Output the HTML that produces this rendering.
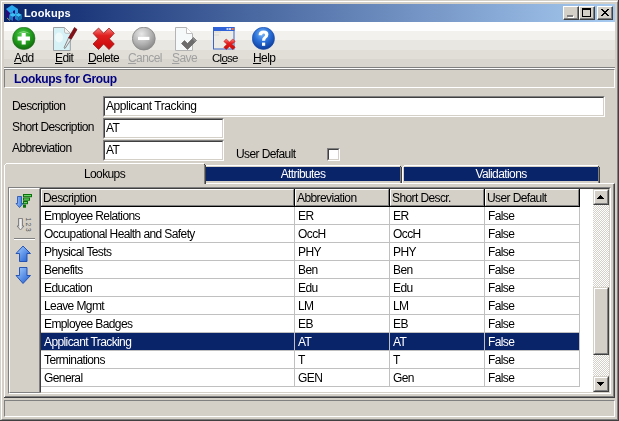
<!DOCTYPE html>
<html><head><meta charset="utf-8">
<style>
*{margin:0;padding:0;box-sizing:border-box}
html,body{width:619px;height:421px;overflow:hidden;background:#d4d0c8;font-family:"Liberation Sans",sans-serif;font-size:12px;letter-spacing:-0.6px;color:#000}
.a{position:absolute}
.t{position:absolute;white-space:nowrap;line-height:13px;will-change:transform}
.sunk2{border-top:1px solid #808080;border-left:1px solid #808080;border-right:1px solid #fff;border-bottom:1px solid #fff}
.inp{position:absolute;background:#fff;border-top:1px solid #808080;border-left:1px solid #808080;border-right:1px solid #fff;border-bottom:1px solid #fff}
.inp:before{content:"";position:absolute;left:0;top:0;right:0;bottom:0;border-top:1px solid #404040;border-left:1px solid #404040;border-right:1px solid #d4d0c8;border-bottom:1px solid #d4d0c8}
.raised{position:absolute;background:#d4d0c8;border-top:1px solid #d4d0c8;border-left:1px solid #d4d0c8;border-right:1px solid #404040;border-bottom:1px solid #404040}
.raised:before{content:"";position:absolute;left:0;top:0;right:0;bottom:0;border-top:1px solid #fff;border-left:1px solid #fff;border-right:1px solid #808080;border-bottom:1px solid #808080}
.tb{position:absolute;top:0;height:14px;width:16px}
.u{text-decoration:underline}
.hc{position:absolute;top:0;height:18px;background:#d4d0c8;border-right:1px solid #000;border-bottom:1px solid #000}
.hc:before{content:"";position:absolute;left:0;top:0;right:0;bottom:0;border-top:1px solid #fff;border-left:1px solid #fff;border-right:1px solid #808080;border-bottom:1px solid #808080}
</style></head><body>
<!-- window frame -->
<div class="a" style="left:1px;top:1px;width:617px;height:419px;border-top:1px solid #fff;border-left:1px solid #fff;border-right:1px solid #808080;border-bottom:1px solid #808080"></div>
<div class="a" style="left:0;top:0;width:619px;height:421px;border-right:1px solid #404040;border-bottom:1px solid #404040"></div>

<!-- title bar -->
<div class="a" style="left:4px;top:4px;width:611px;height:18px;background:linear-gradient(to right,#0a246a,#a6caf0)"></div>
<svg class="a" style="left:5px;top:4px" width="18" height="18" viewBox="0 0 18 18">
 <path d="M1 5 L7 1 L13 5 L13 9 L7 12 L1 9Z" fill="#2aa8ee"/>
 <path d="M1 5 L1 13 L5 16 L5 9Z" fill="#2a0c78"/>
 <path d="M5 9 L7 8 L9 9 L9 12 L7 13 L5 12Z" fill="#1b86c8"/>
 <path d="M8 7 L10 6 L10 10 L8 11Z" fill="#2a0c78"/>
 <path d="M4 11 L8 9 L12 11 L8 13Z" fill="#3cc0f6"/>
 <path d="M4 11 L8 13 L8 17 L4 15Z" fill="#1a78c0"/>
 <path d="M8 13 L12 11 L12 15 L8 17Z" fill="#2a0c78"/>
 <path d="M10 11 L13.5 9 L17 11 L13.5 13Z" fill="#3cc0f6"/>
 <path d="M10 11 L13.5 13 L13.5 17 L10 15Z" fill="#1b86c8"/>
 <path d="M13.5 13 L17 11 L17 15 L13.5 17Z" fill="#1570b0"/>
 <path d="M2 14 L5 16.5" stroke="#c8c070" stroke-width="0.8"/>
</svg>
<div class="t" style="left:24px;top:7px;color:#fff;font-weight:bold;font-size:11px;letter-spacing:0.15px">Lookups</div>
<div class="a" style="left:563px;top:6px;width:16px;height:14px;background:#d4d0c8;border-top:1px solid #fff;border-left:1px solid #fff;border-right:1px solid #404040;border-bottom:1px solid #404040"></div><div class="a" style="left:577px;top:7px;width:1px;height:12px;background:#808080"></div><div class="a" style="left:564px;top:18px;width:14px;height:1px;background:#808080"></div><div class="a" style="left:568px;top:16px;width:6px;height:2px;background:#fff"></div><div class="a" style="left:567px;top:15px;width:6px;height:2px;background:#808080"></div><div class="a" style="left:579px;top:6px;width:16px;height:14px;background:#d4d0c8;border-top:1px solid #fff;border-left:1px solid #fff;border-right:1px solid #404040;border-bottom:1px solid #404040"></div><div class="a" style="left:593px;top:7px;width:1px;height:12px;background:#808080"></div><div class="a" style="left:580px;top:18px;width:14px;height:1px;background:#808080"></div><div class="a" style="left:582px;top:8px;width:9px;height:2px;background:#000"></div><div class="a" style="left:582px;top:10px;width:1px;height:7px;background:#000"></div><div class="a" style="left:590px;top:10px;width:1px;height:7px;background:#000"></div><div class="a" style="left:582px;top:16px;width:9px;height:1px;background:#000"></div><div class="a" style="left:597px;top:6px;width:16px;height:14px;background:#d4d0c8;border-top:1px solid #fff;border-left:1px solid #fff;border-right:1px solid #404040;border-bottom:1px solid #404040"></div><div class="a" style="left:611px;top:7px;width:1px;height:12px;background:#808080"></div><div class="a" style="left:598px;top:18px;width:14px;height:1px;background:#808080"></div><div class="a" style="left:601px;top:9px;width:1px;height:1px;background:#000"></div><div class="a" style="left:602px;top:9px;width:1px;height:1px;background:#000"></div><div class="a" style="left:607px;top:9px;width:1px;height:1px;background:#000"></div><div class="a" style="left:608px;top:9px;width:1px;height:1px;background:#000"></div><div class="a" style="left:602px;top:10px;width:1px;height:1px;background:#000"></div><div class="a" style="left:603px;top:10px;width:1px;height:1px;background:#000"></div><div class="a" style="left:606px;top:10px;width:1px;height:1px;background:#000"></div><div class="a" style="left:607px;top:10px;width:1px;height:1px;background:#000"></div><div class="a" style="left:603px;top:11px;width:1px;height:1px;background:#000"></div><div class="a" style="left:604px;top:11px;width:1px;height:1px;background:#000"></div><div class="a" style="left:605px;top:11px;width:1px;height:1px;background:#000"></div><div class="a" style="left:606px;top:11px;width:1px;height:1px;background:#000"></div><div class="a" style="left:604px;top:12px;width:1px;height:1px;background:#000"></div><div class="a" style="left:605px;top:12px;width:1px;height:1px;background:#000"></div><div class="a" style="left:603px;top:13px;width:1px;height:1px;background:#000"></div><div class="a" style="left:604px;top:13px;width:1px;height:1px;background:#000"></div><div class="a" style="left:605px;top:13px;width:1px;height:1px;background:#000"></div><div class="a" style="left:606px;top:13px;width:1px;height:1px;background:#000"></div><div class="a" style="left:602px;top:14px;width:1px;height:1px;background:#000"></div><div class="a" style="left:603px;top:14px;width:1px;height:1px;background:#000"></div><div class="a" style="left:606px;top:14px;width:1px;height:1px;background:#000"></div><div class="a" style="left:607px;top:14px;width:1px;height:1px;background:#000"></div><div class="a" style="left:601px;top:15px;width:1px;height:1px;background:#000"></div><div class="a" style="left:602px;top:15px;width:1px;height:1px;background:#000"></div><div class="a" style="left:607px;top:15px;width:1px;height:1px;background:#000"></div><div class="a" style="left:608px;top:15px;width:1px;height:1px;background:#000"></div>

<!-- toolbar -->
<div class="a" style="left:4px;top:22px;width:611px;height:45px;background:linear-gradient(to bottom,#fefefe 0,#fefefe 9px,#f2f1ee 9px,#f2f1ee 18px,#e9e7e2 18px,#e9e7e2 28px,#e1ded8 28px,#e1ded8 37px,#d9d6cf 37px)"></div>
<div class="a" style="left:4px;top:67px;width:611px;height:1px;background:#808080"></div>
<div class="a" style="left:4px;top:68px;width:611px;height:1px;background:#fff"></div>

<!-- toolbar icons -->
<svg class="a" style="left:12px;top:27px" width="24" height="24" viewBox="0 0 24 24">
 <defs><radialGradient id="gg" cx="45%" cy="35%" r="65%"><stop offset="0" stop-color="#5fd05a"/><stop offset="0.55" stop-color="#22a01e"/><stop offset="1" stop-color="#0e6a0c"/></radialGradient></defs>
 <circle cx="11.8" cy="11.4" r="11.2" fill="url(#gg)" stroke="#2a6a28" stroke-width="0.6"/>
 <path d="M5 7 Q11.8 1.5 18.6 7 Q11.8 3.6 5 7Z" fill="#b8f0b0" opacity="0.7"/>
 <path d="M9.7 6 H13.7 V9.6 H18 V13.6 H13.7 V17.6 H9.7 V13.6 H5.6 V9.6 H9.7Z" fill="#fff"/>
</svg>
<div class="t" style="left:14px;top:52px"><span class="u">A</span>dd</div>

<svg class="a" style="left:52px;top:26px" width="26" height="26" viewBox="0 0 26 26">
 <path d="M1.5 1.5 H12.5 L18.3 7.3 V24.5 H1.5Z" fill="#d6f2f6" stroke="#9aa0a4" stroke-width="1"/>
 <ellipse cx="7" cy="11.5" rx="4" ry="5" fill="#eefafa"/>
 <path d="M12.5 1.5 L12.5 6 Q13 7.3 14 7.3 H18.3Z" fill="#f4f4f4" stroke="#b0b0b0" stroke-width="0.8"/>
 <path d="M22.5 1.5 L25 3.5 L19 13.5 L16.5 12Z" fill="#8a1018" stroke="#5a0810" stroke-width="0.7"/>
 <path d="M16.5 12 L19 13.5 L13 22.5 L12 21.8Z" fill="#e8e8e8" stroke="#606060" stroke-width="0.7"/>
</svg>
<div class="t" style="left:55px;top:52px"><span class="u">E</span>dit</div>

<svg class="a" style="left:92px;top:27px" width="24" height="24" viewBox="0 0 24 24">
 <defs><linearGradient id="rg" x1="0" y1="0" x2="0" y2="1"><stop offset="0" stop-color="#f88080"/><stop offset="0.35" stop-color="#e02020"/><stop offset="1" stop-color="#c80808"/></linearGradient></defs>
 <path d="M1 6.3 L6.6 1 L11.6 6.3 L17 1 L22.3 6.3 L17.3 11.8 L22.3 17 L17 22.6 L11.6 17 L6.6 22.6 L1 17 L6 11.8Z" fill="url(#rg)" stroke="#901010" stroke-width="0.7" stroke-linejoin="round"/>
</svg>
<div class="t" style="left:88px;top:52px"><span class="u">D</span>elete</div>

<svg class="a" style="left:132px;top:27px" width="25" height="25" viewBox="0 0 25 25">
 <defs><radialGradient id="cg" cx="40%" cy="30%" r="70%"><stop offset="0" stop-color="#e8e8e8"/><stop offset="0.6" stop-color="#b4b4b4"/><stop offset="1" stop-color="#8c8c8c"/></radialGradient></defs>
 <circle cx="11.8" cy="11.6" r="11.4" fill="url(#cg)" stroke="#8a8a8a" stroke-width="0.9"/>
 <rect x="6" y="9.8" width="11.4" height="3.2" fill="#fff"/>
</svg>
<div class="t" style="left:128px;top:52px;color:#a0a0a0"><span class="u">C</span>ancel</div>

<svg class="a" style="left:175px;top:26px" width="23" height="26" viewBox="0 0 23 26">
 <path d="M0.5 1.5 H11.5 L17.5 7.5 V24.5 H0.5Z" fill="#f6f9fa" stroke="#b4b4b4"/>
 <path d="M11.5 1.5 V7.5 H17.5" fill="#fff" stroke="#c0c0c0"/>
 <path d="M6.5 17.5 L9.5 14.5 L12.5 17.5 L18.5 11.5 L21.5 14.5 L12.5 23.5Z" fill="#6c6c6c" stroke="#585858" stroke-width="0.6"/>
 <path d="M18.5 11.5 L21.5 14.5 L20 16 L17.3 13Z" fill="#8a8a8a"/>
</svg>
<div class="t" style="left:172px;top:52px;color:#a0a0a0"><span class="u">S</span>ave</div>

<svg class="a" style="left:213px;top:27px" width="24" height="24" viewBox="0 0 24 24">
 <rect x="0.5" y="0.5" width="20.5" height="21.5" fill="#ecebe6" stroke="#3a64c8"/>
 <rect x="0" y="0" width="21.5" height="4" fill="#2f62d8"/>
 <rect x="13.5" y="1" width="2" height="2" fill="#c0d0ff"/>
 <rect x="16" y="1" width="2" height="2" fill="#c0d0ff"/>
 <rect x="18.5" y="1" width="2.2" height="2" fill="#f07040"/>
 <path d="M1 5 H8 M1 8 H6" stroke="#d8d8d0" stroke-width="1"/>
 <defs><linearGradient id="rg2" x1="0" y1="0" x2="0" y2="1"><stop offset="0" stop-color="#ff8080"/><stop offset="0.4" stop-color="#e81c1c"/><stop offset="1" stop-color="#c80808"/></linearGradient></defs><path d="M10.8 14.5 L13.2 12 L16.5 15 L19.8 12 L22.2 14.5 L19 17.3 L22.2 20.2 L19.8 22.6 L16.5 19.6 L13.2 22.6 L10.8 20.2 L14 17.3Z" fill="url(#rg2)" stroke="#b01010" stroke-width="0.5" stroke-linejoin="round"/>
</svg>
<div class="t" style="left:212px;top:52px;letter-spacing:-0.75px;font-size:11.5px">Cl<span class="u">o</span>se</div>

<svg class="a" style="left:252px;top:27px" width="24" height="24" viewBox="0 0 24 24">
 <defs><radialGradient id="bg" cx="45%" cy="30%" r="70%"><stop offset="0" stop-color="#7ab8f8"/><stop offset="0.5" stop-color="#2a70d8"/><stop offset="1" stop-color="#0c3c9c"/></radialGradient></defs>
 <circle cx="11.4" cy="11.4" r="11.1" fill="url(#bg)" stroke="#1a4aa8" stroke-width="0.6"/>
 <path d="M6.6 8.2 Q6.6 3.6 11.6 3.6 Q16.4 3.6 16.4 7.6 Q16.4 10 14 11.4 Q13.2 12 13.2 13.8 H10 Q10 10.8 11.8 9.8 Q13 9 13 7.9 Q13 6.6 11.6 6.6 Q10 6.6 10 8.2Z" fill="#fff"/>
 <rect x="10" y="15.6" width="3.2" height="3.2" fill="#fff"/>
</svg>
<div class="t" style="left:253px;top:52px"><span class="u">H</span>elp</div>

<!-- header panel -->
<div class="a sunk2" style="left:4px;top:69px;width:611px;height:19px"></div>
<div class="t" style="left:14px;top:73px;color:#000080;font-weight:bold;font-size:12px;letter-spacing:-0.35px">Lookups for Group</div>

<!-- fields -->
<div class="t" style="left:12px;top:100px">Description</div>
<div class="t" style="left:12px;top:121px">Short Description</div>
<div class="t" style="left:12px;top:142px">Abbreviation</div>
<div class="inp" style="left:103px;top:96px;width:502px;height:21px"><div class="t" style="left:2px;top:3px;letter-spacing:-0.42px">Applicant Tracking</div></div>
<div class="inp" style="left:103px;top:118px;width:121px;height:21px"><div class="t" style="left:2px;top:3px">AT</div></div>
<div class="inp" style="left:103px;top:140px;width:121px;height:21px"><div class="t" style="left:2px;top:3px">AT</div></div>
<div class="t" style="left:236px;top:148px">User Default</div>
<div class="inp" style="left:327px;top:148px;width:13px;height:13px"></div>

<!-- tabs -->
<div class="a" style="left:4px;top:183px;width:611px;height:215px;border-top:1px solid #fff;border-left:1px solid #fff;border-right:1px solid #404040;border-bottom:1px solid #404040"></div>
<div class="a" style="left:5px;top:184px;width:609px;height:213px;border-right:1px solid #808080;border-bottom:1px solid #808080"></div>
<div class="a" style="left:4px;top:397px;width:1px;height:1px;background:#404040"></div>
<!-- active tab -->
<div class="a" style="left:4px;top:165px;width:202px;height:19px;background:#d4d0c8"></div>
<div class="a" style="left:6px;top:163px;width:198px;height:2px;background:#d4d0c8"></div>
<div class="a" style="left:6px;top:163px;width:198px;height:1px;background:#fff"></div>
<div class="a" style="left:5px;top:164px;width:1px;height:1px;background:#fff"></div>
<div class="a" style="left:4px;top:165px;width:1px;height:19px;background:#fff"></div>
<div class="a" style="left:204px;top:164px;width:1px;height:1px;background:#404040"></div>
<div class="a" style="left:204px;top:165px;width:1px;height:19px;background:#808080"></div>
<div class="a" style="left:205px;top:165px;width:1px;height:19px;background:#404040"></div>
<div class="t" style="left:4px;top:168px;width:201px;text-align:center">Lookups</div>
<!-- inactive tabs -->
<div class="a" style="left:206px;top:165px;width:194px;height:1px;background:#fff"></div>
<div class="a" style="left:206px;top:167px;width:194px;height:14px;background:#0a246a"></div>
<div class="a" style="left:400px;top:166px;width:1px;height:1px;background:#404040"></div>
<div class="a" style="left:400px;top:167px;width:1px;height:16px;background:#808080"></div>
<div class="a" style="left:401px;top:167px;width:1px;height:16px;background:#404040"></div>
<div class="t" style="left:206px;top:168px;width:194px;text-align:center;color:#fff">Attributes</div>
<div class="a" style="left:402px;top:167px;width:1px;height:16px;background:#fff"></div>
<div class="a" style="left:403px;top:166px;width:1px;height:1px;background:#fff"></div>
<div class="a" style="left:404px;top:165px;width:194px;height:1px;background:#fff"></div>
<div class="a" style="left:404px;top:167px;width:194px;height:14px;background:#0a246a"></div>
<div class="a" style="left:598px;top:166px;width:1px;height:1px;background:#404040"></div>
<div class="a" style="left:598px;top:167px;width:1px;height:16px;background:#808080"></div>
<div class="a" style="left:599px;top:167px;width:1px;height:16px;background:#404040"></div>
<div class="t" style="left:404px;top:168px;width:194px;text-align:center;color:#fff">Validations</div>

<!-- outer frame around toolpanel + grid -->
<div class="a" style="left:8px;top:187px;width:603px;height:207px;border-top:1px solid #808080;border-left:1px solid #808080;border-right:1px solid #fff;border-bottom:1px solid #fff"></div>
<!-- tool panel -->
<div class="a" style="left:9px;top:188px;width:31px;height:205px;border-top:1px solid #fff;border-left:1px solid #fff;border-right:1px solid #808080;border-bottom:1px solid #808080"></div>
<svg class="a" style="left:14px;top:192px" width="20" height="20" viewBox="0 0 20 20">
 <defs><linearGradient id="ab" x1="0" y1="0" x2="1" y2="0"><stop offset="0" stop-color="#a8ccff"/><stop offset="1" stop-color="#2a6ad8"/></linearGradient></defs>
 <path d="M3.5 4.5 H7.5 V11.5 H9 L5.5 15.5 L2 11.5 H3.5Z" fill="url(#ab)" stroke="#1a4ab0" stroke-width="0.8"/>
 <rect x="9.5" y="2.5" width="8" height="2.2" fill="#6ad86a" stroke="#0a700a" stroke-width="1"/>
 <rect x="9.5" y="6" width="6" height="2.2" fill="#6ad86a" stroke="#0a700a" stroke-width="1"/>
 <rect x="9.5" y="9.5" width="4" height="2.2" fill="#6ad86a" stroke="#0a700a" stroke-width="1"/>
 <rect x="9.5" y="13" width="2" height="2.2" fill="#6ad86a" stroke="#0a700a" stroke-width="1"/>
</svg>
<svg class="a" style="left:14px;top:215px" width="20" height="20" viewBox="0 0 20 20">
 <defs><linearGradient id="ga" x1="0" y1="0" x2="1" y2="0"><stop offset="0" stop-color="#a8a8a8"/><stop offset="0.5" stop-color="#f0f0f0"/><stop offset="1" stop-color="#b0b0b0"/></linearGradient></defs><path d="M4.5 3.5 H8.5 V11 H10 L6.5 15 L3 11 H4.5Z" fill="url(#ga)" stroke="#707070" stroke-width="0.8"/>
 <text x="0" y="0" transform="translate(12,2.5) rotate(90)" font-size="6.5" letter-spacing="1.6" fill="#505050" font-family="Liberation Sans">123</text>
</svg>
<div class="a" style="left:14px;top:238px;width:21px;height:1px;background:#808080"></div>
<div class="a" style="left:14px;top:239px;width:21px;height:1px;background:#fff"></div>
<svg class="a" style="left:15px;top:245px" width="17" height="18" viewBox="0 0 17 18">
 <defs><linearGradient id="ab2" x1="0" y1="0" x2="1" y2="1"><stop offset="0" stop-color="#a8d0ff"/><stop offset="1" stop-color="#1a5ad0"/></linearGradient></defs>
 <path d="M8 1 L15.5 8.5 H12 V16.5 H4.5 V8.5 H1Z" fill="url(#ab2)" stroke="#1a4ab0" stroke-width="0.9"/>
</svg>
<svg class="a" style="left:15px;top:266px" width="17" height="19" viewBox="0 0 17 19">
 <path d="M4.5 1.5 H12 V9.5 H15.5 L8 17.5 L1 9.5 H4.5Z" fill="url(#ab2)" stroke="#1a4ab0" stroke-width="0.9"/>
</svg>

<!-- grid -->
<div class="a" style="left:40px;top:188px;width:570px;height:205px;background:#fff;border-top:1px solid #404040;border-left:1px solid #404040;border-right:1px solid #d4d0c8;border-bottom:1px solid #d4d0c8"></div>
<div id="grid" class="a" style="left:41px;top:189px;width:568px;height:203px;overflow:hidden">
<div class="hc" style="left:0px;width:254px"><div class="t" style="left:2px;top:3px">Description</div></div>
<div class="hc" style="left:254px;width:95px"><div class="t" style="left:2px;top:3px">Abbreviation</div></div>
<div class="hc" style="left:349px;width:95px"><div class="t" style="left:2px;top:3px">Short Descr.</div></div>
<div class="hc" style="left:444px;width:95px"><div class="t" style="left:2px;top:3px">User Default</div></div>
<div class="t" style="left:3px;top:21px">Employee Relations</div>
<div class="t" style="left:257px;top:21px">ER</div>
<div class="t" style="left:352px;top:21px">ER</div>
<div class="t" style="left:447px;top:21px">False</div>
<div class="a" style="left:0;top:35px;width:539px;height:1px;background:#c0c0c0"></div>
<div class="t" style="left:3px;top:39px">Occupational Health and Safety</div>
<div class="t" style="left:257px;top:39px">OccH</div>
<div class="t" style="left:352px;top:39px">OccH</div>
<div class="t" style="left:447px;top:39px">False</div>
<div class="a" style="left:0;top:53px;width:539px;height:1px;background:#c0c0c0"></div>
<div class="t" style="left:3px;top:57px">Physical Tests</div>
<div class="t" style="left:257px;top:57px">PHY</div>
<div class="t" style="left:352px;top:57px">PHY</div>
<div class="t" style="left:447px;top:57px">False</div>
<div class="a" style="left:0;top:71px;width:539px;height:1px;background:#c0c0c0"></div>
<div class="t" style="left:3px;top:75px">Benefits</div>
<div class="t" style="left:257px;top:75px">Ben</div>
<div class="t" style="left:352px;top:75px">Ben</div>
<div class="t" style="left:447px;top:75px">False</div>
<div class="a" style="left:0;top:89px;width:539px;height:1px;background:#c0c0c0"></div>
<div class="t" style="left:3px;top:93px">Education</div>
<div class="t" style="left:257px;top:93px">Edu</div>
<div class="t" style="left:352px;top:93px">Edu</div>
<div class="t" style="left:447px;top:93px">False</div>
<div class="a" style="left:0;top:107px;width:539px;height:1px;background:#c0c0c0"></div>
<div class="t" style="left:3px;top:111px">Leave Mgmt</div>
<div class="t" style="left:257px;top:111px">LM</div>
<div class="t" style="left:352px;top:111px">LM</div>
<div class="t" style="left:447px;top:111px">False</div>
<div class="a" style="left:0;top:125px;width:539px;height:1px;background:#c0c0c0"></div>
<div class="t" style="left:3px;top:129px">Employee Badges</div>
<div class="t" style="left:257px;top:129px">EB</div>
<div class="t" style="left:352px;top:129px">EB</div>
<div class="t" style="left:447px;top:129px">False</div>
<div class="a" style="left:0;top:143px;width:539px;height:1px;background:#c0c0c0"></div>
<div class="a" style="left:0;top:144px;width:539px;height:17px;background:#0a246a"></div>
<div class="t" style="left:3px;top:147px;color:#fff">Applicant Tracking</div>
<div class="t" style="left:257px;top:147px;color:#fff">AT</div>
<div class="t" style="left:352px;top:147px;color:#fff">AT</div>
<div class="t" style="left:447px;top:147px;color:#fff">False</div>
<div class="a" style="left:0;top:161px;width:539px;height:1px;background:#c0c0c0"></div>
<div class="t" style="left:3px;top:165px">Terminations</div>
<div class="t" style="left:257px;top:165px">T</div>
<div class="t" style="left:352px;top:165px">T</div>
<div class="t" style="left:447px;top:165px">False</div>
<div class="a" style="left:0;top:179px;width:539px;height:1px;background:#c0c0c0"></div>
<div class="t" style="left:3px;top:183px">General</div>
<div class="t" style="left:257px;top:183px">GEN</div>
<div class="t" style="left:352px;top:183px">Gen</div>
<div class="t" style="left:447px;top:183px">False</div>
<div class="a" style="left:0;top:197px;width:539px;height:1px;background:#c0c0c0"></div>
<div class="a" style="left:253px;top:18px;width:1px;height:180px;background:#c0c0c0"></div>
<div class="a" style="left:348px;top:18px;width:1px;height:180px;background:#c0c0c0"></div>
<div class="a" style="left:443px;top:18px;width:1px;height:180px;background:#c0c0c0"></div>
<div class="a" style="left:538px;top:18px;width:1px;height:180px;background:#c0c0c0"></div>
<div class="a" style="left:552px;top:0;width:16px;height:203px;background-color:#fff;background-image:linear-gradient(45deg,#d4d0c8 25%,transparent 25%,transparent 75%,#d4d0c8 75%),linear-gradient(45deg,#d4d0c8 25%,transparent 25%,transparent 75%,#d4d0c8 75%);background-size:2px 2px;background-position:0 0,1px 1px"></div>
<div class="raised" style="left:552px;top:0;width:16px;height:16px"><div class="a" style="left:6px;top:5px;width:1px;height:1px;background:#000"></div><div class="a" style="left:5px;top:6px;width:3px;height:1px;background:#000"></div><div class="a" style="left:4px;top:7px;width:5px;height:1px;background:#000"></div><div class="a" style="left:3px;top:8px;width:7px;height:1px;background:#000"></div></div>
<div class="raised" style="left:552px;top:187px;width:16px;height:16px"><div class="a" style="left:3px;top:5px;width:7px;height:1px;background:#000"></div><div class="a" style="left:4px;top:6px;width:5px;height:1px;background:#000"></div><div class="a" style="left:5px;top:7px;width:3px;height:1px;background:#000"></div><div class="a" style="left:6px;top:8px;width:1px;height:1px;background:#000"></div></div>
<div class="raised" style="left:552px;top:98px;width:16px;height:68px"></div>
</div>

<!-- status bar -->
<div class="a sunk2" style="left:4px;top:400px;width:611px;height:17px"></div>
</body></html>
